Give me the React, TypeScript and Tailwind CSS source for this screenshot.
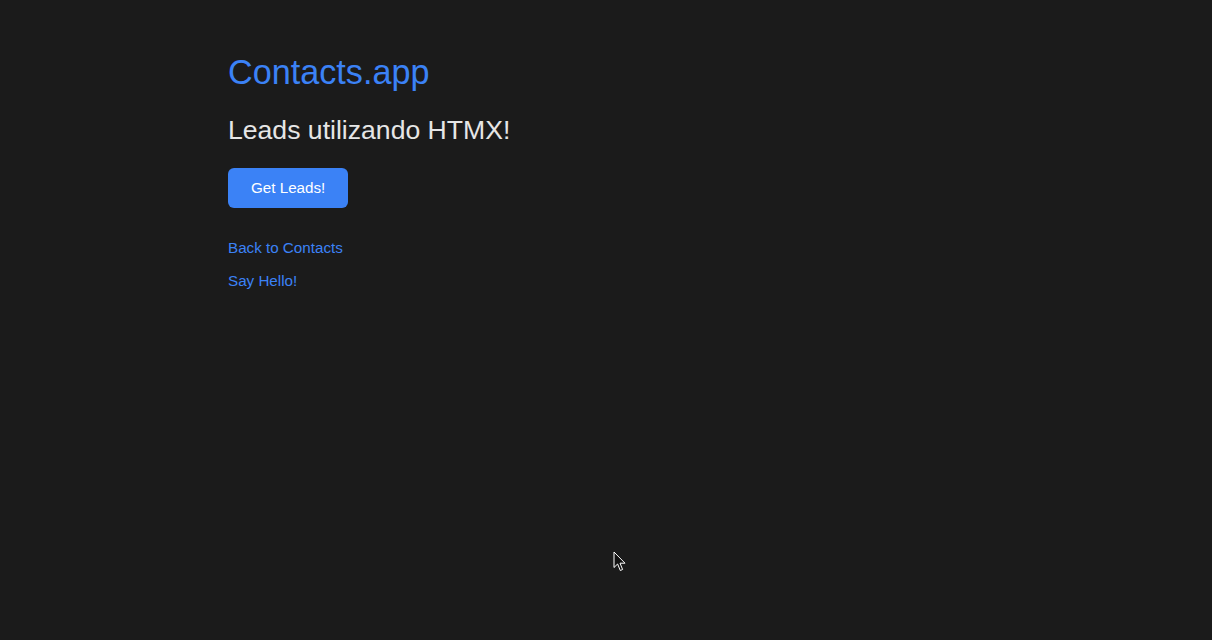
export default function App() {
  return (
    <div
      className="relative min-h-screen w-full bg-[#1b1b1b] text-[#e6e6e6]"
      style={{ fontFamily: '"Liberation Sans", Arial, sans-serif' }}
    >
      <main className="mx-auto w-[756px] pt-[52px]">
        <h1 className="text-[34.2px] leading-[40px] text-[#3b82f6]">Contacts.app</h1>
        <h2 className="mt-[22px] text-[26.6px] leading-[32px] text-[#e6e6e6]">Leads utilizando HTMX!</h2>
        <button
          type="button"
          className="mt-[22px] h-[40px] rounded-[6px] bg-[#3b82f6] px-[23px] text-[15.2px] leading-[20px] text-white"
        >
          Get Leads!
        </button>
        <div className="mt-[30px] flex flex-col items-start gap-[13px] text-[15.2px] leading-[20px]">
          <a href="#" className="text-[#3b82f6]">Back to Contacts</a>
          <a href="#" className="text-[#3b82f6]">Say Hello!</a>
        </div>
      </main>

      {/* mouse pointer captured in the screenshot */}
      <svg
        className="absolute left-[613px] top-[551px]"
        width="14"
        height="22"
        viewBox="0 0 14 22"
      >
        <path
          d="M1 1 L1 16.5 L4.6 13 L7.3 19.5 L9.6 18.5 L7 12.2 L12 12.2 Z"
          fill="#111"
          stroke="#fff"
          strokeWidth="1"
          strokeLinejoin="round"
        />
      </svg>
    </div>
  );
}
